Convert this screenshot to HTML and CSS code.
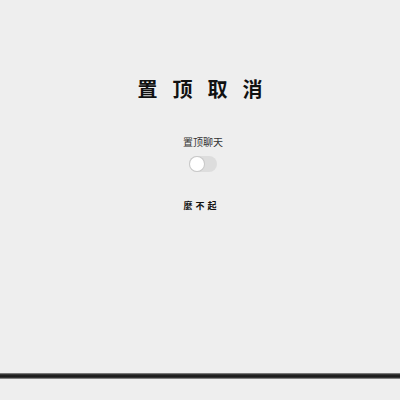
FILE: index.html
```html
<!DOCTYPE html>
<html lang="zh">
  <head>
    <meta charset="utf-8" />
    <title>置顶取消</title>
    <link rel="stylesheet" href="styles.css">
  </head>
  <body>
    <div class="page">
      <h1 class="title">置顶取消</h1>
      <div class="setting">
        <span class="label">置顶聊天</span>
        <span class="switch"><span class="knob"></span></span>
      </div>
      <p class="note">麼不起</p>
    </div>
    <div class="rule"></div>
  </body>
</html>
```

FILE: styles.css
```css
html {
  background-color: #eeeeee;
}
body {
  margin: 0;
  height: 400px;
  display: flex;
  flex-direction: column;
  font-family: "Noto Sans CJK SC", sans-serif;
  color: #111;
}
.page {
  flex: 1;
  display: flex;
  flex-direction: column;
  align-items: center;
  padding-top: 76px;
}
.title {
  margin: 0;
  font-size: 20px;
  line-height: 26px;
  font-weight: 700;
  letter-spacing: 15px;
  margin-right: -15px;
}
.setting {
  margin-top: 33px;
  margin-left: 6px;
  display: flex;
  flex-direction: column;
  align-items: center;
  gap: 7px;
}
.label {
  font-size: 10px;
  line-height: 14px;
  color: #333;
}
.switch {
  width: 28px;
  height: 16px;
  border-radius: 8px;
  background-color: #dddddd;
  display: flex;
  align-items: center;
}
.knob {
  width: 14px;
  height: 14px;
  border-radius: 50%;
  background-color: #fff;
  box-shadow: 0 0 0 1px #c8c8c8;
  margin-left: 1px;
}
.note {
  margin: 28px 0 0;
  font-size: 9px;
  line-height: 12px;
  font-weight: 700;
  letter-spacing: 3px;
  margin-right: -3px;
}
.rule {
  height: 6px;
  margin-bottom: 21px;
  background: linear-gradient(to bottom, #999 0, #222 30%, #1a1a1a 70%, #aaa 100%);
}
```
